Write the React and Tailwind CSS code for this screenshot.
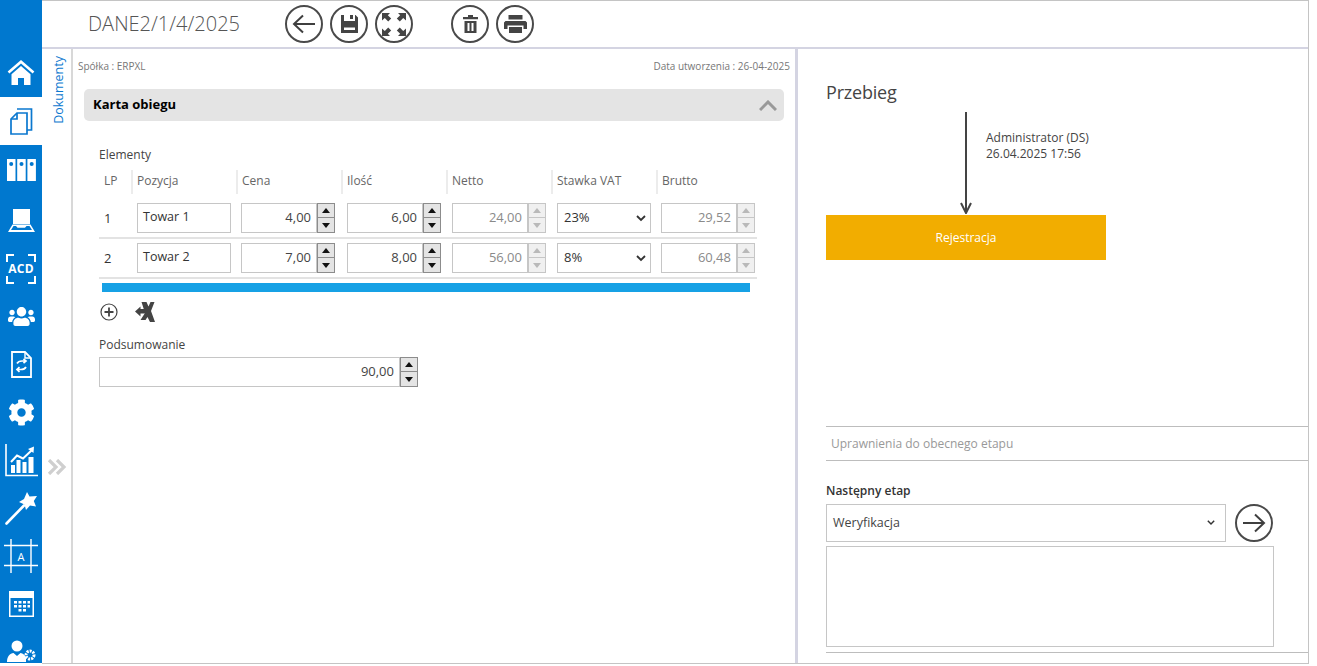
import { FaCog, FaUsers } from 'react-icons/fa';

function HomeIcon() {
  return (
    <svg width="28" height="26" viewBox="0 0 28 26" fill="none">
      <path d="M1.500 12.500 14 1.800l12.500 10.700" stroke="white" strokeWidth="2.600" />
      <path d="M4.500 14.200 14 6l9.500 8.200V25H17v-7h-6v7H4.500z" fill="white" />
    </svg>
  );
}

function DocsIcon() {
  return (
    <svg width="24" height="29" viewBox="0 0 24 29" fill="none" stroke="#0b78cf" strokeWidth="1.700">
      <path d="M2 12 8 6h10v21H2z" />
      <path d="M8 6v6H2" />
      <path d="M8 2h14.500v21H18" />
    </svg>
  );
}

function BooksIcon() {
  return (
    <svg width="29" height="22" viewBox="0 0 29 22">
      <path d="M0 0h8.500v22H0zM10.200 0h8.500v22h-8.500zM20.400 0h8.500v22h-8.500z" fill="white" />
      <circle cx="4.200" cy="5" r="2" fill="#0078cf" />
      <circle cx="14.500" cy="5" r="2" fill="#0078cf" />
      <circle cx="24.700" cy="5" r="2" fill="#0078cf" />
    </svg>
  );
}

function LaptopIcon() {
  return (
    <svg width="27" height="23" viewBox="0 0 27 23">
      <path d="M5 0h17v15H5z" fill="white" />
      <path d="M4.500 15.500h18L27 23H0z" fill="white" />
      <path d="M5.500 17 3 21h21l-2.500-4h-3l-1.500 1.800H9.500L8 17z" fill="#0078cf" />
    </svg>
  );
}

function AcdIcon() {
  return (
    <div className="relative w-[30px] h-[30px] flex items-center justify-center">
      <svg className="absolute inset-0" width="30" height="30" viewBox="0 0 30 30" fill="none" stroke="white" strokeWidth="2">
        <path d="M1 8V1h7M22 1h7v7M1 22v7h7M22 29h7v-7" />
      </svg>
      <span className="text-white text-[12px] font-bold tracking-[0.3px] leading-none">ACD</span>
    </div>
  );
}

function FileSyncIcon() {
  return (
    <svg width="21" height="27" viewBox="0 0 21 27" fill="none" stroke="white">
      <path d="M1 1h13l6 6v19H1z" strokeWidth="1.800" />
      <path d="M14 1v6h6" strokeWidth="1.400" />
      <path d="M6 12.500c1-2 3-2.500 5-2.500h3.500M12.500 7.800l2.500 2.200-2.500 2.200M15 16c-1 2-3 2.500-5 2.500H6.500M8.500 16.200 6 18.500l2.500 2.300" strokeWidth="1.700" />
    </svg>
  );
}

function ChartIcon() {
  return (
    <svg width="33" height="33" viewBox="0 0 33 33" fill="none">
      <path d="M1 0v31.500h32" stroke="white" strokeWidth="1.600" />
      <path d="M6 21h4v8H6zM11.500 16h4v13h-4zM17.500 18h4v11h-4zM23.500 13h5v16h-5z" fill="white" />
      <path d="M6 18 12 11.500l6 3L27 6" stroke="white" strokeWidth="2" />
      <path d="M23 5 29 2.500l-.5 6.500z" fill="white" />
    </svg>
  );
}

function WandIcon() {
  return (
    <svg width="33" height="33" viewBox="0 0 33 33" fill="none">
      <path d="M1.500 31.500 19 13.500" stroke="white" strokeWidth="2.600" strokeLinecap="round" />
      <path d="M22 0l2.500 4.500 7.500-.5-3.200 5 2.200 5.500-6-1-4 4.500-1.500-5.500-5.500-2.500 5-3z" fill="white" />
    </svg>
  );
}

function FrameIcon() {
  return (
    <div className="relative w-[34px] h-[34px] flex items-center justify-center">
      <svg className="absolute inset-0" width="34" height="34" viewBox="0 0 34 34" stroke="white" strokeWidth="1.400">
        <path d="M0 6.500h34M0 26.500h34M7 0v34M27 0v34" />
      </svg>
      <span className="text-white text-[11px] leading-none">A</span>
    </div>
  );
}

function CalendarIcon() {
  return (
    <svg width="25" height="26" viewBox="0 0 25 26">
      <path d="M0 0h25v26H0z" fill="white" />
      <path d="M1.500 7h22v17.500h-22z" fill="#0078cf" />
      <path d="M5 10h3v2.500H5zM9.500 10h3v2.500h-3zM14 10h3v2.500h-3zM18.500 10h2.500v2.500h-2.500zM5 14h3v2.500H5zM9.500 14h3v2.500h-3zM14 14h3v2.500h-3zM18.500 14h2.500v2.500h-2.500zM9.500 18h3v2.500h-3zM14 18h3v2.500h-3z" fill="white" />
    </svg>
  );
}

function UserGearIcon() {
  return (
    <svg width="30" height="22" viewBox="0 0 30 22">
      <circle cx="11" cy="6" r="5.500" fill="white" />
      <path d="M1 22c0-6 3-8.500 6.500-9l3.500 3 3.500-3c2.500.4 4.500 2 5.500 4.500V22z" fill="white" />
      <circle cx="24" cy="15" r="4" fill="none" stroke="white" strokeWidth="3" strokeDasharray="2 1" />
    </svg>
  );
}

function CircleButton({ children }) {
  return (
    <div className="w-[38px] h-[38px] rounded-full border-2 border-[#4a4a4a] flex items-center justify-center">
      {children}
    </div>
  );
}

function ArrowLeft({ flip }) {
  return (
    <svg width="24" height="20" viewBox="0 0 24 20" fill="none" stroke="#3f3f3f" strokeWidth="2" className={flip ? 'rotate-180' : ''}>
      <path d="M23 10H2M11 1.500 2 10l9 8.500" />
    </svg>
  );
}

function SaveIcon() {
  return (
    <svg width="17" height="18" viewBox="0 0 17 18">
      <path d="M0 0h3v6h11V0h.500L17 2.500V18H0z" fill="#444" />
      <path d="M9 0h3v4H9z" fill="#444" />
      <path d="M3 12.500h11v2.500H3z" fill="white" />
    </svg>
  );
}

function ExpandIcon() {
  return (
    <svg width="26" height="23" viewBox="0 0 26 23" fill="#444">
      <path d="M0 0h9L6.800 2.200l3.400 3.400-3 2.900-3.400-3.400L1 7.500V0z" />
      <path d="M26 0h-9l2.200 2.200-3.400 3.400 3 2.900 3.400-3.400L25 7.500V0z" />
      <path d="M0 23h9l-2.200-2.200 3.400-3.400-3-2.900-3.400 3.400L1 15.500V23z" />
      <path d="M26 23h-9l2.200-2.200-3.400-3.400 3-2.900 3.400 3.400 2.800-2.400V23z" />
    </svg>
  );
}

function TrashIcon() {
  return (
    <svg width="15" height="18" viewBox="0 0 15 18" fill="#444">
      <path d="M5 0h5v2h5v2.200H0V2h5z" />
      <path d="M1.500 6h12v12h-12zM4.500 8v8h2V8zM8.500 8v8h2V8z" fillRule="evenodd" />
    </svg>
  );
}

function PrintIcon() {
  return (
    <svg width="23" height="18" viewBox="0 0 23 18" fill="#444">
      <path d="M4.500 0h14v4.500h-14z" />
      <path d="M1.500 6h20L23 7.500V14h-3.500v-3.500h-16V14H0V7.500z" />
      <path d="M5 12h13v6H5z" />
    </svg>
  );
}

function Spinner({ disabled }) {
  const box = disabled ? 'border-[#c6c6c6] bg-[#f0f0f0]' : 'border-[#8c8c8c] bg-[#e4e4e4]';
  const tri = disabled ? '#b9b9b9' : '#111';
  return (
    <div className="w-[18px] h-[30px] flex flex-col shrink-0">
      <div className={`h-[15px] border ${box} flex items-center justify-center`}>
        <svg width="8" height="5" viewBox="0 0 8 5"><path d="M4 0l4 5H0z" fill={tri} /></svg>
      </div>
      <div className={`h-[15px] border border-t-0 ${box} flex items-center justify-center`}>
        <svg width="8" height="5" viewBox="0 0 8 5"><path d="M4 5 0 0h8z" fill={tri} /></svg>
      </div>
    </div>
  );
}

function NumberField({ value, disabled, width = 'w-[94px]' }) {
  return (
    <div className={`${width} h-[30px] flex`}>
      <div className={`flex-1 border border-[#c6c6c6] flex items-center justify-end pr-[5px] text-[13px] ${disabled ? 'text-[#8a8a8a]' : 'text-[#444]'}`}>
        {value}
      </div>
      <Spinner disabled={disabled} />
    </div>
  );
}

function Chevron({ size = 10 }) {
  return (
    <svg width={size} height={size * 0.7} viewBox="0 0 10 7" fill="none" stroke="#333" strokeWidth="1.800">
      <path d="M1 1l4 4 4-4" />
    </svg>
  );
}

function Row({ lp, name, price, qty, net, vat, gross }) {
  return (
    <div className="h-[40px] border-b-2 border-[#e3e3e3] grid grid-cols-[38px_104px_106px_105px_105px_104px_94px] items-center">
      <div className="pl-[5px] text-[13px] text-[#333] pt-[1px]">{lp}</div>
      <div className="w-[94px] h-[30px] border border-[#c6c6c6] flex items-center pl-[5px] pb-[1px] text-[12.500px] text-[#333]">{name}</div>
      <NumberField value={price} />
      <NumberField value={qty} />
      <NumberField value={net} disabled />
      <div className="w-[94px] h-[30px] border border-[#c6c6c6] flex items-center justify-between pl-[6px] pr-[4px] text-[13px] text-[#333]">
        {vat}
        <Chevron />
      </div>
      <NumberField value={gross} disabled />
    </div>
  );
}

const headers = ['Pozycja', 'Cena', 'Ilość', 'Netto', 'Stawka VAT', 'Brutto'];

export default function App() {
  const item = 'flex items-center justify-center shrink-0';
  return (
    <div className="w-full h-[666px] bg-white flex font-['Open_Sans',sans-serif] overflow-hidden">
      {/* menu */}
      <div className="w-[42px] h-[663px] bg-[#0078cf] flex flex-col pt-[49px] overflow-hidden shrink-0">
        <div className={`h-[48px] ${item}`}><HomeIcon /></div>
        <div className={`h-[48px] bg-white ${item}`}><DocsIcon /></div>
        <div className={`h-[50px] ${item}`}><BooksIcon /></div>
        <div className={`h-[50px] ${item}`}><LaptopIcon /></div>
        <div className={`h-[48px] ${item}`}><AcdIcon /></div>
        <div className={`h-[47px] text-white ${item}`}><FaUsers size={27} /></div>
        <div className={`h-[48px] ${item}`}><FileSyncIcon /></div>
        <div className={`h-[48px] text-white ${item}`}><FaCog size={27} /></div>
        <div className={`h-[48px] ${item}`}><ChartIcon /></div>
        <div className={`h-[48px] ${item}`}><WandIcon /></div>
        <div className={`h-[48px] ${item}`}><FrameIcon /></div>
        <div className={`h-[48px] ${item}`}><CalendarIcon /></div>
        <div className="h-[44px] flex items-start justify-center pt-[12px] shrink-0"><UserGearIcon /></div>
      </div>

      <div className="w-[1267px] h-[664px] border-t border-r border-b border-[#c4c4c4] flex flex-col shrink-0">
        {/* toolbar */}
        <div className="h-[48px] border-b-2 border-[#d4d4e2] flex items-center pl-[46px] shrink-0">
          <div className="w-[197px] text-[20px] font-light text-[#555]">DANE2/1/4/2025</div>
          <div className="flex gap-[7px]">
            <CircleButton><ArrowLeft /></CircleButton>
            <CircleButton><SaveIcon /></CircleButton>
            <CircleButton><ExpandIcon /></CircleButton>
          </div>
          <div className="flex gap-[7px] ml-[38px]">
            <CircleButton><TrashIcon /></CircleButton>
            <CircleButton><PrintIcon /></CircleButton>
          </div>
        </div>

        <div className="flex-1 flex min-h-0">
          {/* rail */}
          <div className="w-[31px] border-r-2 border-[#d8d8d8] flex flex-col items-center pt-[7px] shrink-0">
            <div className="[writing-mode:vertical-rl] rotate-180 ml-[5px] text-[12.500px] text-[#0b78cf] leading-none">Dokumenty</div>
            <svg className="mt-[335px]" width="20" height="16" viewBox="0 0 20 16" fill="none" stroke="#cfcfcf" strokeWidth="3.200">
              <path d="M2 1l7 7-7 7M10 1l7 7-7 7" />
            </svg>
          </div>

          {/* form */}
          <div className="w-[725px] border-r-[3px] border-[#d4d4e2] pt-[10px] shrink-0">
            <div className="flex justify-between pl-[5px] pr-[5px] text-[10px] leading-[14px] text-[#777]">
              <span>Spółka : ERPXL</span>
              <span>Data utworzenia : 26-04-2025</span>
            </div>
            <div className="mt-[16px] ml-[11px] mr-[11px] h-[32px] bg-[#e4e4e4] rounded-[5px] flex items-center justify-between pl-[9px] pr-[7px]">
              <span className="text-[13px] font-bold text-black">Karta obiegu</span>
              <svg width="18" height="11" viewBox="0 0 18 11" fill="none" stroke="#999" strokeWidth="3">
                <path d="M1 10l8-8 8 8" />
              </svg>
            </div>

            <div className="ml-[26px] w-[658px] mt-[26px]">
              <div className="text-[12px] leading-[16px] text-[#444]">Elementy</div>
              <div className="mt-[7px] h-[24px] flex text-[12px] text-[#666] leading-[22px]">
                <div className="w-[32px] pl-[5px] shrink-0">LP</div>
                {headers.map((h) => (
                  <div key={h} className="w-[105px] shrink-0 border-l-2 border-[#ececec] pl-[4px]">{h}</div>
                ))}
              </div>
              <div className="h-[5px]" />
              <Row lp="1" name="Towar 1" price="4,00" qty="6,00" net="24,00" vat="23%" gross="29,52" />
              <Row lp="2" name="Towar 2" price="7,00" qty="8,00" net="56,00" vat="8%" gross="60,48" />
              <div className="mt-[4px] ml-[3px] w-[648px] h-[9px] bg-[#17a1e5]" />
              <div className="mt-[10px] flex items-center gap-[17px] pl-[1px]">
                <svg width="18" height="18" viewBox="0 0 18 18" fill="none" stroke="#444">
                  <circle cx="9" cy="9" r="8" strokeWidth="1.200" />
                  <path d="M9 4.500v9M4.500 9h9" strokeWidth="1.800" />
                </svg>
                <svg width="20" height="20" viewBox="0 0 20 20" fill="#444">
                  <path d="M6.500 0h5l2 4.500L15.500 0h4l-3.500 9 4 11h-5l-2.500-5-2 3H5.500l4.500-7z" />
                  <path d="M0 9.500l5.500-5V7h4.500v4.500H5.500v3z" />
                </svg>
              </div>
              <div className="mt-[15px] text-[12px] leading-[16px] text-[#444]">Podsumowanie</div>
              <div className="mt-[4px]"><NumberField value="90,00" width="w-[319px]" /></div>
            </div>
          </div>

          {/* przebieg */}
          <div className="flex-1 min-w-0 pl-[28px] pt-[30px] flex flex-col">
            <div className="text-[18px] leading-[26px] text-[#444] tracking-[-0.2px]">Przebieg</div>
            <div className="mt-[7px] flex h-[103px]">
              <div className="w-[140px] flex justify-end">
                <svg className="translate-x-[6px]" width="12" height="102" viewBox="0 0 12 102" fill="none" stroke="#444" strokeWidth="2">
                  <path d="M6 0v101M1 91l5 10 5-10" />
                </svg>
              </div>
              <div className="pl-[20px] pt-[18px] text-[12px] leading-[16px] text-[#444]">
                <div>Administrator (DS)</div>
                <div>26.04.2025 17:56</div>
              </div>
            </div>
            <div className="w-[280px] h-[45px] bg-[#f2ad00] flex items-center justify-center pt-[1px] text-[12px] text-white">Rejestracja</div>

            <div className="mt-[166px] h-[35px] border-t border-b border-[#bdbdbd] flex items-center pl-[5px] text-[12px] text-[#999]">
              Uprawnienia do obecnego etapu
            </div>
            <div className="mt-[22px] text-[12px] leading-[16px] font-semibold text-[#333]">Następny etap</div>
            <div className="mt-[5px] flex items-center gap-[9px]">
              <div className="w-[400px] h-[38px] border border-[#c6c6c6] flex items-center justify-between pl-[6px] pr-[10px] text-[12.500px] text-[#444]">
                Weryfikacja
                <Chevron size={8} />
              </div>
              <CircleButton><ArrowLeft flip /></CircleButton>
            </div>
            <div className="mt-[4px] w-[448px] h-[101px] border border-[#c6c6c6]" />
            <div className="mt-[5px] border-t border-[#bdbdbd]" />
          </div>
        </div>
      </div>
    </div>
  );
}
